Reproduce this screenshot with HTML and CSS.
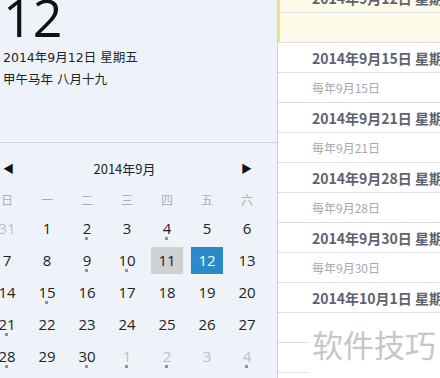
FILE: index.html
```html
<!DOCTYPE html>
<html lang="zh-CN">
<head>
  <meta charset="UTF-8" />
  <title>日历</title>
  <link rel="stylesheet" href="styles.css">
</head>
<body>
  <div class="left">
    <div class="today">
      <div class="big-day">12</div>
      <p class="line">2014年9月12日 星期五</p>
      <p class="line">甲午马年 八月十九</p>
    </div>

    <div class="cal-head">
      <span class="arrow">&#9664;</span>
      <span class="month">2014年9月</span>
      <span class="arrow">&#9654;</span>
    </div>

    <div class="grid">
      <span class="wk">日</span><span class="wk">一</span><span class="wk">二</span><span class="wk">三</span><span class="wk">四</span><span class="wk">五</span><span class="wk">六</span>

      <span class="d other">31</span><span class="d">1</span><span class="d dot">2</span><span class="d">3</span><span class="d dot">4</span><span class="d">5</span><span class="d">6</span>
      <span class="d">7</span><span class="d">8</span><span class="d dot">9</span><span class="d dot">10</span><span class="d"><b class="mark gray">11</b></span><span class="d"><b class="mark blue">12</b></span><span class="d">13</span>
      <span class="d">14</span><span class="d dot">15</span><span class="d">16</span><span class="d">17</span><span class="d">18</span><span class="d">19</span><span class="d">20</span>
      <span class="d dot">21</span><span class="d">22</span><span class="d">23</span><span class="d">24</span><span class="d">25</span><span class="d">26</span><span class="d">27</span>
      <span class="d dot">28</span><span class="d">29</span><span class="d dot">30</span><span class="d other dot">1</span><span class="d other dot">2</span><span class="d other">3</span><span class="d other dot">4</span>
    </div>
  </div>

  <div class="right">
    <div class="events">
      <div class="row title current">2014年9月12日 星期五</div>
      <div class="row sub current"></div>
      <div class="row title">2014年9月15日 星期一</div>
      <div class="row sub">每年9月15日</div>
      <div class="row title">2014年9月21日 星期日</div>
      <div class="row sub">每年9月21日</div>
      <div class="row title">2014年9月28日 星期日</div>
      <div class="row sub">每年9月28日</div>
      <div class="row title">2014年9月30日 星期二</div>
      <div class="row sub">每年9月30日</div>
      <div class="row title">2014年10月1日 星期三</div>
      <div class="row sub"></div>
      <div class="row title"></div>
    </div>
    <div class="watermark">软件技巧</div>
  </div>
</body>
</html>
```

FILE: styles.css
```css
body {
  margin: 0;
  display: flex;
  height: 378px;
  overflow: hidden;
  font-family: "Noto Sans CJK SC", sans-serif;
  color: #222;
}

.left {
  width: 277px;
  flex: none;
  background: #eef3fa;
  border-right: 1px solid #c9d0da;
  overflow: hidden;
}

.today {
  display: flow-root;
  height: 143px;
  border-bottom: 1px solid #cdd4de;
  padding-left: 3px;
  box-sizing: border-box;
}

.big-day {
  font-family: "Open Sans", sans-serif;
  font-size: 52px;
  line-height: 50px;
  margin: -8px 0 0 0;
  color: #111;
}

.line {
  margin: 0;
  font-family: "DejaVu Sans", "Noto Sans CJK SC", sans-serif;
  font-size: 12.5px;
  line-height: 22px;
}

.today .line:first-of-type {
  margin-top: 5px;
}

.cal-head {
  display: flex;
  justify-content: space-between;
  align-items: center;
  height: 24px;
  margin-top: 13px;
  padding: 0 25px 0 3px;
}

.arrow {
  font-size: 11px;
  color: #111;
}

.month {
  font-size: 13px;
  margin-left: -6px;
}

.grid {
  display: grid;
  grid-template-columns: repeat(7, 40px);
  grid-auto-rows: 32px;
  margin-left: -13px;
}

.wk {
  font-size: 12px;
  color: #aab0b8;
  display: flex;
  align-items: center;
  justify-content: center;
  padding-top: 6px;
}

.d {
  position: relative;
  display: flex;
  align-items: center;
  justify-content: center;
  font-family: "Open Sans", sans-serif;
  font-size: 15px;
  color: #222;
}

.d.other {
  color: #bcc0c6;
}

.d.dot::after {
  content: "";
  position: absolute;
  left: 18px;
  bottom: 4px;
  width: 3px;
  height: 3px;
  background: #8f949b;
}

.mark {
  font-weight: normal;
  width: 32px;
  height: 27px;
  display: flex;
  align-items: center;
  justify-content: center;
}

.mark.gray {
  background: #cfd0d2;
}

.mark.blue {
  background: #2c8ac9;
  color: #fff;
}

.right {
  flex: 1;
  position: relative;
  background: #fff;
  overflow: hidden;
}

.events {
  margin-top: -17px;
}

.row {
  height: 30px;
  border-bottom: 1px solid #dcdfe4;
  box-sizing: border-box;
  padding-left: 34px;
  white-space: nowrap;
  display: flex;
  align-items: center;
}

.row.current {
  background: #fdfbe8;
  border-left: 2px solid #f1e58a;
  padding-left: 32px;
}

.title {
  font-size: 14px;
  font-weight: bold;
  color: #5d6370;
}

.sub {
  font-size: 12px;
  color: #a6a9ae;
}

.watermark {
  position: absolute;
  left: 30px;
  right: 0;
  top: 313px;
  height: 60px;
  background: rgba(255, 255, 255, 0.92);
  font-size: 31px;
  color: #c6c6c6;
  padding-left: 4px;
  display: flex;
  align-items: center;
}
```
